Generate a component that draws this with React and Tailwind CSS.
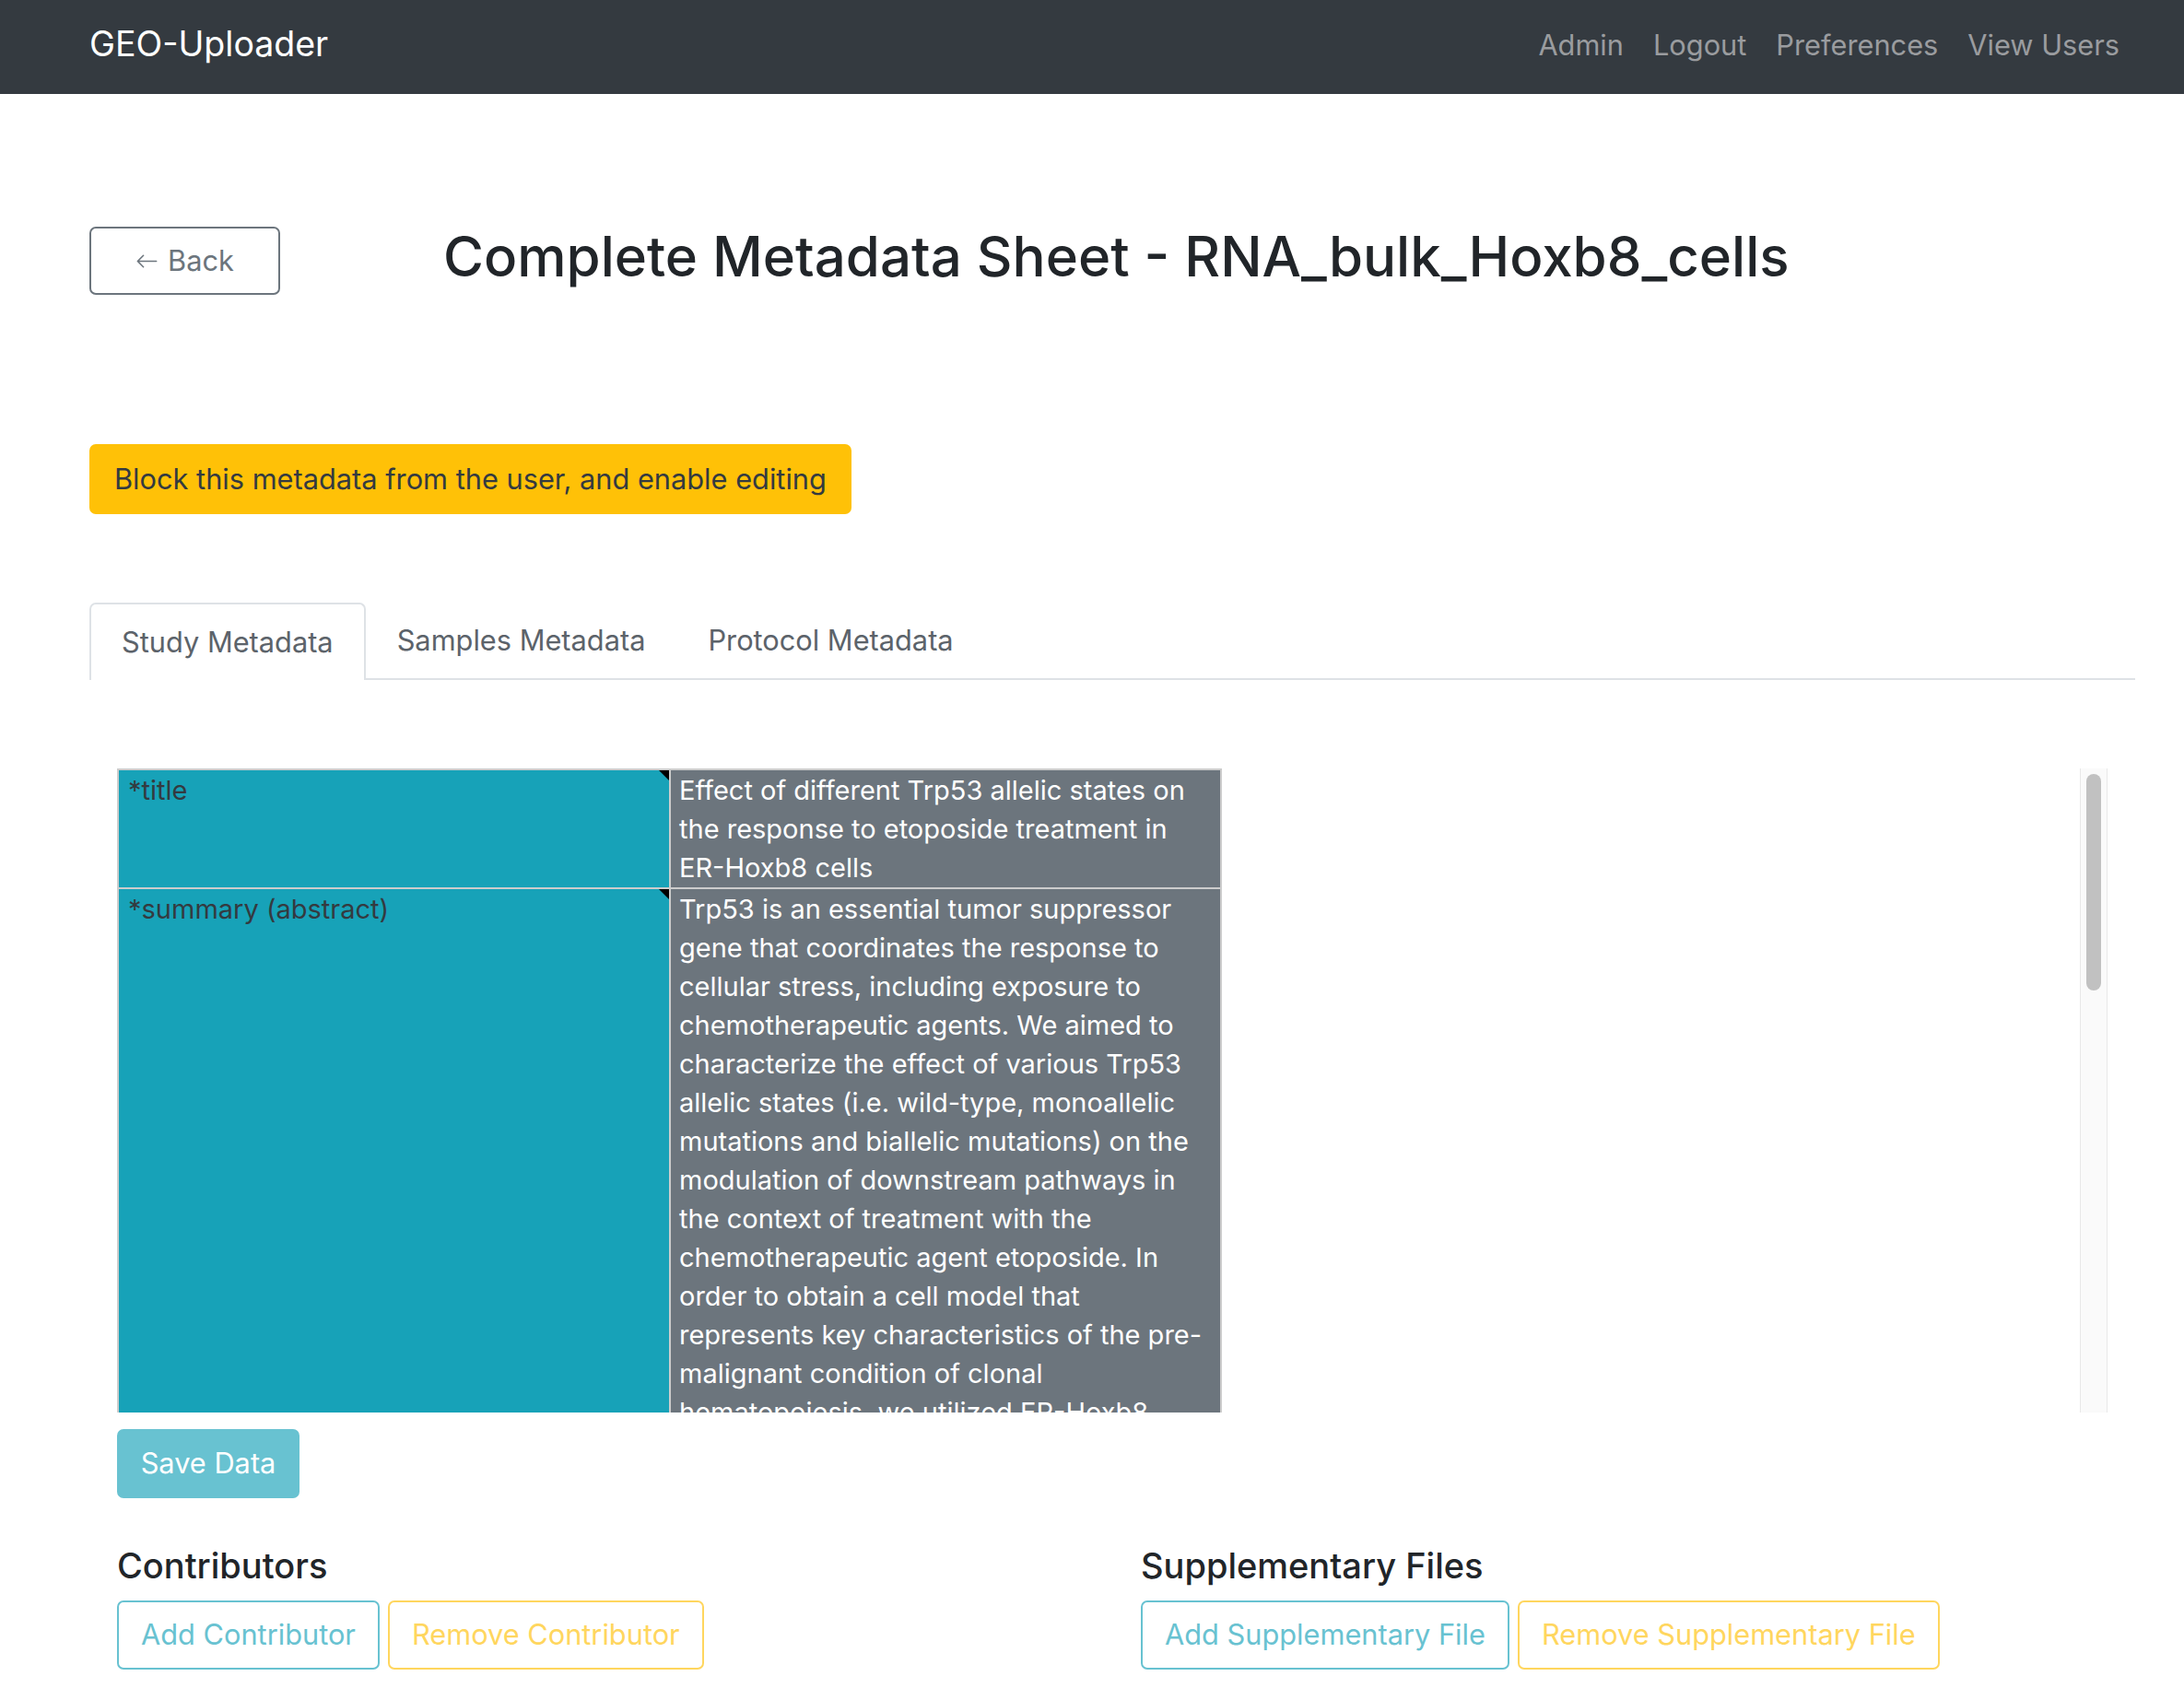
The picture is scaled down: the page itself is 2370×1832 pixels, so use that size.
import React from "react";

const sans = { fontFamily: "Inter, 'Noto Sans', sans-serif" };

const titleLines = [
  "Effect of different Trp53 allelic states on",
  "the response to etoposide treatment in",
  "ER-Hoxb8 cells",
];

const summaryLines = [
  "Trp53 is an essential tumor suppressor",
  "gene that coordinates the response to",
  "cellular stress, including exposure to",
  "chemotherapeutic agents. We aimed to",
  "characterize the effect of various Trp53",
  "allelic states (i.e. wild-type, monoallelic",
  "mutations and biallelic mutations) on the",
  "modulation of downstream pathways in",
  "the context of treatment with the",
  "chemotherapeutic agent etoposide. In",
  "order to obtain a cell model that",
  "represents key characteristics of the pre-",
  "malignant condition of clonal",
  "hematopoiesis, we utilized ER-Hoxb8",
];

// 헤더 셀 오른쪽 위 삼각형 (comment 표시)
const Corner = () => (
  <svg className="absolute top-0 right-0" width="11" height="11" viewBox="0 0 11 11">
    <polygon points="0,0 11,0 11,11" fill="#000" />
  </svg>
);

const Row = ({ label, lines, height }) => (
  <div className="flex border-b-2 border-[#ccc]" style={height ? { height } : undefined}>
    <div className="relative w-[599px] shrink-0 bg-[#17a2b8] border-r-2 border-[#ccc] px-[10px] pt-[1px] text-[#343a40] text-[29px] leading-[42px]">
      {label}
      <Corner />
    </div>
    <div className="w-[598px] shrink-0 bg-[#6c757d] px-[9px] pt-[1px] text-white text-[29px] leading-[42px]">
      {lines.map((l, i) => (
        <div key={i} className="whitespace-nowrap">
          {l}
        </div>
      ))}
    </div>
  </div>
);

const App = () => {
  return (
    <div className="min-h-[1832px] bg-white" style={sans}>
      {/* 상단 네비게이션 */}
      <nav className="h-[102px] bg-[#343a40] flex items-center justify-between pl-[97px] pr-[70px]">
        <span className="text-white text-[37.5px] -mt-[6px]">GEO-Uploader</span>
        <div className="flex gap-[32px] text-[30.75px] text-[#9a9c9f] -mt-[4px]">
          <span>Admin</span>
          <span>Logout</span>
          <span>Preferences</span>
          <span>View Users</span>
        </div>
      </nav>

      <main className="pl-[97px] pr-[53px]">
        {/* 제목 영역 */}
        <div className="mt-[144px] flex items-center">
          <button className="w-[207px] h-[74px] shrink-0 border-2 border-[#6c757d] rounded-[7px] flex items-center justify-center gap-[10px] text-[#6c757d] text-[30.75px]">
            <svg width="25" height="25" viewBox="0 0 16 16" fill="currentColor">
              <path
                fillRule="evenodd"
                d="M15 8a.5.5 0 0 0-.5-.5H2.707l3.147-3.146a.5.5 0 1 0-.708-.708l-4 4a.5.5 0 0 0 0 .708l4 4a.5.5 0 0 0 .708-.708L2.707 8.5H14.5A.5.5 0 0 0 15 8z"
              />
            </svg>
            Back
          </button>
          <h1 className="ml-[177px] text-[60px] leading-[72px] font-medium text-[#212529] -mt-[10px]">
            Complete Metadata Sheet - RNA_bulk_Hoxb8_cells
          </h1>
        </div>

        <button className="mt-[162px] h-[76px] px-[27px] bg-[#ffc107] rounded-[7px] text-[30.75px] text-[#343a40]">
          Block this metadata from the user, and enable editing
        </button>

        {/* 탭 */}
        <div className="mt-[96px] flex border-b-2 border-[#dee2e6] h-[84px]">
          <div className="px-[33px] -mb-[2px] border-2 border-b-0 border-[#dee2e6] rounded-t-[7px] bg-white flex items-center text-[30.75px] text-[#5c636a]">
            Study Metadata
          </div>
          <div className="px-[34px] flex items-center text-[30.75px] text-[#5c636a]">Samples Metadata</div>
          <div className="px-[34px] flex items-center text-[30.75px] text-[#5c636a]">Protocol Metadata</div>
        </div>

        {/* 표 영역 */}
        <div className="px-[30px]">
          <div className="mt-[96px] h-[699px] flex justify-between">
            <div className="w-[1199px] h-full overflow-hidden border-l-2 border-r-2 border-t-2 border-[#ccc]">
              <Row label="*title" lines={titleLines} height={129} />
              <Row label="*summary (abstract)" lines={summaryLines} />
            </div>
            <div className="w-[30px] h-full bg-[#fafafa] border-x border-[#e8e8e8] pt-[6px] flex justify-center">
              <div className="w-[16px] h-[235px] rounded-full bg-[#c1c1c1]" />
            </div>
          </div>

          <button className="mt-[18px] w-[198px] h-[75px] rounded-[7px] bg-[#68c2d1] text-white text-[30.75px]">
            Save Data
          </button>

          <div className="mt-[52px] flex">
            <div className="w-[1111px]">
              <h4 className="text-[38px] leading-[43px] font-medium text-[#212529]">Contributors</h4>
              <div className="mt-[16px] flex gap-[9px]">
                <button className="h-[75px] px-[24px] border-2 border-[#68c2d1] rounded-[7px] text-[#68c2d1] text-[30.75px]">
                  Add Contributor
                </button>
                <button className="h-[75px] px-[24px] border-2 border-[#ffd65e] rounded-[7px] text-[#ffd65e] text-[30.75px]">
                  Remove Contributor
                </button>
              </div>
            </div>
            <div>
              <h4 className="text-[38px] leading-[43px] font-medium text-[#212529]">Supplementary Files</h4>
              <div className="mt-[16px] flex gap-[9px]">
                <button className="h-[75px] px-[24px] border-2 border-[#68c2d1] rounded-[7px] text-[#68c2d1] text-[30.75px]">
                  Add Supplementary File
                </button>
                <button className="h-[75px] px-[24px] border-2 border-[#ffd65e] rounded-[7px] text-[#ffd65e] text-[30.75px]">
                  Remove Supplementary File
                </button>
              </div>
            </div>
          </div>
        </div>
      </main>
    </div>
  );
};

export default App;
